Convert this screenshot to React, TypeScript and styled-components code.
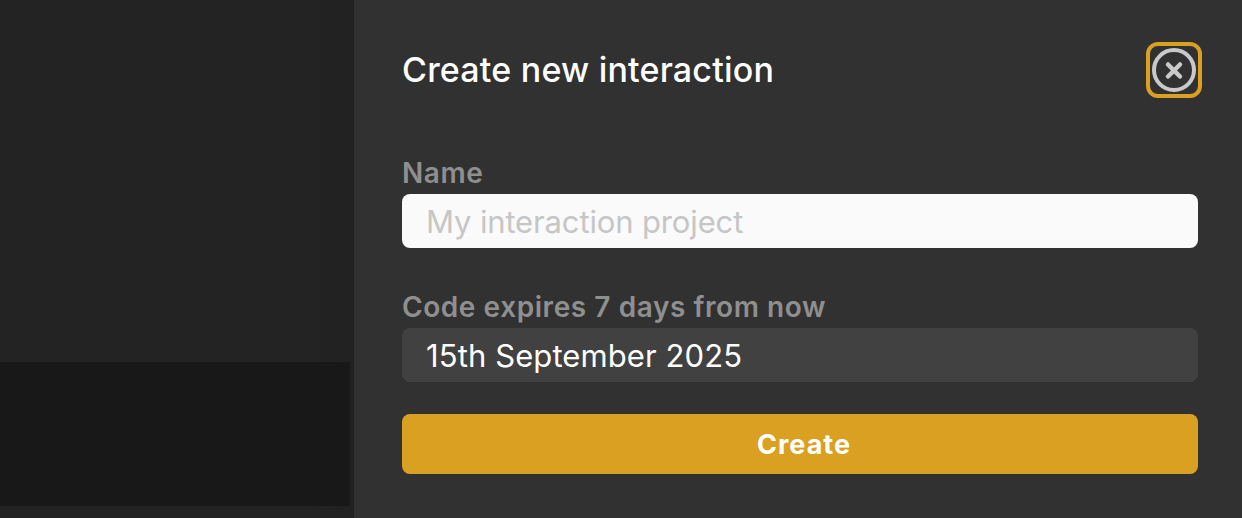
import React from "react";
import styled, { createGlobalStyle } from "styled-components";

const Global = createGlobalStyle`
  html, body { margin: 0; padding: 0; background: #222222; }
  body { font-family: Inter, "Liberation Sans", sans-serif; -webkit-font-smoothing: antialiased; }
  * { box-sizing: border-box; }
`;

const Page = styled.div`
  width: 1242px;
  height: 518px;
  display: flex;
  overflow: hidden;
`;

const Backdrop = styled.div`
  width: 354px;
  flex: none;
  display: flex;
  flex-direction: column;
  padding: 362px 4px 12px 0;
  background: linear-gradient(90deg, #232323 0%, #232323 88%, #212121 100%);
`;

const DarkCard = styled.div`
  flex: 1;
  background: #181818;
`;

const Drawer = styled.section`
  flex: 1;
  background: #313131;
  padding: 42px 40px 44px 48px;
  display: flex;
  flex-direction: column;
`;

const Header = styled.header`
  display: flex;
  align-items: center;
  justify-content: space-between;
  height: 56px;
  margin-bottom: 59px;
`;

const Title = styled.h1`
  margin: 0;
  font-size: 34px;
  line-height: 56px;
  font-weight: 500;
  color: #ffffff;
  letter-spacing: 0.2px;
`;

const CloseButton = styled.button`
  width: 56px;
  height: 56px;
  padding: 0;
  background: transparent;
  border: 4px solid #daa022;
  border-radius: 12px;
  display: flex;
  align-items: center;
  justify-content: center;
`;

const Field = styled.div<{ $gap: number }>`
  display: flex;
  flex-direction: column;
  width: 796px;
  margin-bottom: ${(p) => p.$gap}px;
`;

const Label = styled.label`
  font-size: 28px;
  line-height: 32px;
  height: 32px;
  margin-bottom: 5px;
  font-weight: 600;
  color: #8f8f8f;
  letter-spacing: 0.57px;
`;

const Input = styled.input<{ $dark?: boolean }>`
  height: 54px;
  width: 100%;
  border: none;
  outline: none;
  border-radius: 8px;
  padding: 0 24px;
  font-family: inherit;
  font-size: 31px;
  letter-spacing: ${(p) => (p.$dark ? "0.1px" : "-0.14px")};
  background: ${(p) => (p.$dark ? "#414141" : "#fafafa")};
  color: ${(p) => (p.$dark ? "#ffffff" : "#222222")};
  &::placeholder { color: #c6c6c6; opacity: 1; }
`;

const CreateButton = styled.button`
  width: 796px;
  height: 60px;
  border: none;
  border-radius: 8px;
  background: #daa022;
  color: #ffffff;
  font-family: inherit;
  font-size: 27px;
  font-weight: 700;
  letter-spacing: 1px;
  padding: 0 0 0 8px;
`;

export default function App() {
  return (
    <Page>
      <Global />
      <Backdrop>
        <DarkCard />
      </Backdrop>
      <Drawer>
        <Header>
          <Title>Create new interaction</Title>
          <CloseButton aria-label="Close">
            <svg width="46" height="46" viewBox="0 0 46 46" fill="none">
              <circle cx="23" cy="23" r="20" stroke="#c9c9c9" strokeWidth="4" />
              <path d="M17 17.5 L29 29.5 M29 17.5 L17 29.5" stroke="#c9c9c9" strokeWidth="4.5" strokeLinecap="round" />
            </svg>
          </CloseButton>
        </Header>
        <Field $gap={43}>
          <Label>Name</Label>
          <Input placeholder="My interaction project" readOnly />
        </Field>
        <Field $gap={32}>
          <Label>Code expires 7 days from now</Label>
          <Input $dark value="15th September 2025" readOnly />
        </Field>
        <CreateButton>Create</CreateButton>
      </Drawer>
    </Page>
  );
}
